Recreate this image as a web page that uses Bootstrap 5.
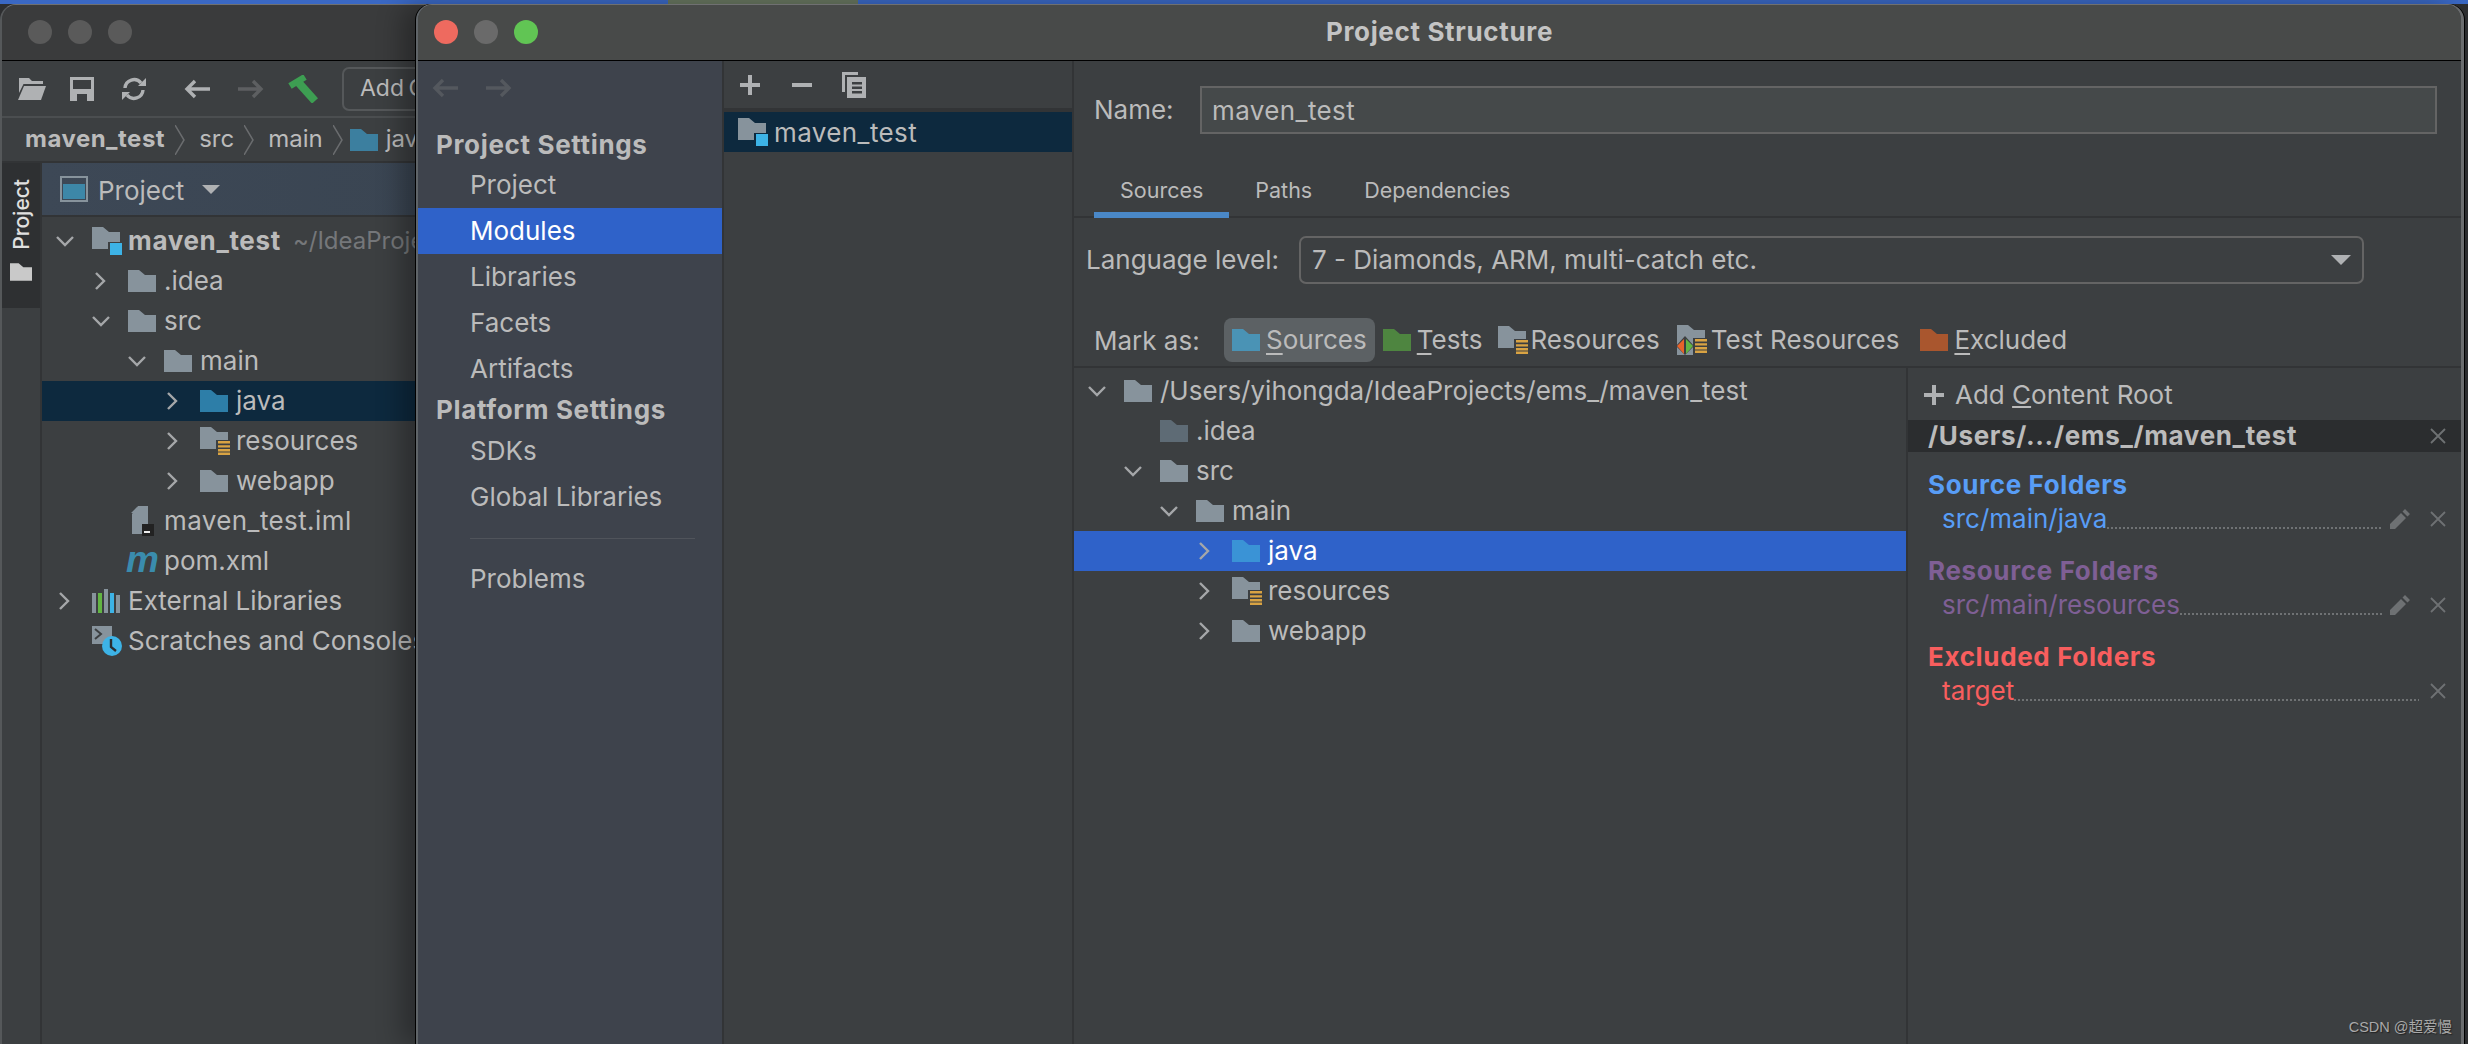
<!DOCTYPE html>
<html lang="en">
<head>
<meta charset="utf-8">
<title>Project Structure</title>
<link rel="stylesheet" href="https://cdn.jsdelivr.net/npm/bootstrap@5.3.0/dist/css/bootstrap.min.css">
<style>
html,body{height:100%;}
body{margin:0;position:relative;overflow:hidden;width:2468px;height:1044px;font-family:Inter,"Noto Sans CJK SC",sans-serif;font-size:26px;line-height:1.2;color:#bbb;
 background:linear-gradient(to right,#3a68c4 668px,#67755f 668px,#67755f 858px,#3a68c4 858px) top/100% 4px no-repeat,#2d2e30;}
svg{display:block;flex:none;}
.ide-win{position:absolute;top:4px;bottom:0;display:flex;flex-direction:column;overflow:hidden;border-radius:16px 16px 0 0;border-top:1px solid #6f7071;}
.main-win{left:0;width:440px;background:#3c3f41;border-left:2px solid #55585a;}
.dialog-win{left:416px;width:2048px;background:#3c3f41;border-left:2px solid #5f6468;border-right:3px solid #6a6c6e;box-shadow:-1px 0 0 #000,1px 0 0 #000,-14px 0 26px rgba(0,0,0,.3);}
.title-bar{height:56px;flex:none;border-bottom:1px solid #000;display:flex;align-items:center;position:relative;}
.main-win .title-bar{background:#3a3b3c;}
.dialog-win .title-bar{background:#484a49;justify-content:center;font-weight:700;font-size:26px;letter-spacing:.65px;color:#c4c4c4;padding-bottom:2px;}
.lights{position:absolute;display:flex;gap:16px;top:15px;left:26px;}
.dialog-win .lights{left:16px;}
.light{width:24px;height:24px;border-radius:50%;background:#5a5a5a;}
.l-red{background:#ee6a5f;}.l-gray{background:#6a6a6a;}.l-green{background:#61c554;}
.tool-bar{height:57px;flex:none;border-bottom:2px solid #4b4e50;display:flex;align-items:center;padding-left:16px;font-size:23px;}
.tb-sep{width:2px;height:40px;background:#55585a;margin:0 18px 0 20px;}
.add-btn{border:2px solid #55585a;border-radius:7px;height:44px;margin-left:24px;padding:0 16px;display:flex;align-items:center;white-space:nowrap;word-spacing:-2px;}
.crumbs{height:45px;flex:none;border-bottom:2px solid #323436;display:flex;align-items:center;padding-left:23px;white-space:nowrap;font-size:24px;}
.crumbs .b{letter-spacing:.5px;}
.crumb-gap{margin:0 14px 0 10px;}
.crumb-gap.last{margin-right:7px;}
.main-body{flex:1;display:flex;min-height:0;}
.tool-strip{width:38px;flex:none;border-right:2px solid #323436;box-sizing:content-box;}
.strip-tab{background:#2e3032;height:145px;display:flex;flex-direction:column;align-items:center;padding-top:16px;gap:13px;color:#e0e0e0;font-size:21px;font-weight:500;}
.strip-text{writing-mode:vertical-rl;transform:rotate(180deg);line-height:1;}
.proj-panel{flex:1;min-width:0;}
.proj-head{height:54px;background:linear-gradient(to right,#3d4856,#3a4552);border-bottom:2px solid #323436;display:flex;align-items:center;padding-left:18px;}
.proj-head .ttl{margin-left:10px;margin-right:18px;padding-top:3px;}
.left-tree{padding-top:4px;}
.t-row{height:40px;display:flex;align-items:center;white-space:nowrap;}
.pl0{padding-left:14px;}.pl1{padding-left:50px;}.pl2{padding-left:86px;}.pl3{padding-left:122px;}
.chev{width:36px;flex:none;display:flex;}
.ico{width:36px;flex:none;display:flex;}
.ico .mvn{font:italic 700 37px/1 "Liberation Sans",sans-serif;color:#3a8cad;margin-left:-2px;margin-top:-8px;height:32px;letter-spacing:0;}
.is-sel{background:#0d293e;}
.is-act{background:#2f62c9;color:#fff;}
.b{font-weight:700;letter-spacing:.65px;}
.dim{color:#75777a;}
.wide{letter-spacing:.4px;}
.side{width:304px;flex:none;background:#3e434c;display:flex;flex-direction:column;}
.side-top{height:67px;flex:none;display:flex;align-items:center;gap:28px;padding:0 0 13px 14px;}
.side-h{font-weight:700;letter-spacing:.65px;padding-left:18px;display:flex;align-items:center;flex:none;}
.side-i{height:46px;flex:none;padding-left:52px;display:flex;align-items:center;}
.side-sep{height:1px;background:#50545b;margin:18px 27px 17px 52px;flex:none;}
.mid{width:352px;flex:none;border-left:2px solid #323436;border-right:2px solid #323436;}
.mid-tools{height:47px;border-bottom:4px solid #323436;box-sizing:content-box;display:flex;align-items:center;padding-left:16px;gap:32px;}
.mid-row{height:40px;display:flex;align-items:center;padding-left:14px;white-space:nowrap;}
.mid-row .wide{padding-top:2px;}
.rt{flex:1;min-width:0;display:flex;flex-direction:column;}
.name-row{height:73px;flex:none;display:flex;align-items:flex-end;padding:0 24px 0 20px;}
.name-row .lbl{width:106px;flex:none;height:48px;display:flex;align-items:center;}
.name-input.form-control{flex:1;height:48px;background:#45494a;border:2px solid #646464;border-radius:0;color:#bbb;font-size:26px;letter-spacing:.4px;padding:0 10px;box-shadow:none;}
.tab-strip{height:84px;flex:none;padding-left:20px;border-bottom:2px solid #323436;flex-wrap:nowrap;align-items:flex-end;}
.tab-strip .nav-link{height:58px;padding:18px 26px 0;color:#bbb;font-size:21.500px;line-height:24px;background:none;border:0;margin-bottom:-2px;}
.tab-strip .nav-link.active{border-bottom:6px solid #4a88c7;}
.lang-row{height:66px;flex:none;display:flex;align-items:flex-end;padding:0 97px 0 12px;}
.lang-row .lbl{width:213px;flex:none;height:48px;display:flex;align-items:center;}
.combo{flex:1;height:48px;border:2px solid #646464;border-radius:7px;display:flex;align-items:center;justify-content:space-between;padding:0 11px;}
.mark-row{height:84px;flex:none;display:flex;align-items:flex-end;padding:0 0 4px 20px;border-bottom:2px solid #323436;box-sizing:border-box;}
.mark-row .lbl{width:130px;flex:none;height:44px;display:flex;align-items:center;padding-top:1px;}
.mk{height:44px;display:flex;align-items:center;gap:6px;padding:0 8px;white-space:nowrap;border-radius:8px;}
.mk.on{background:#5c6164;}
.mk u{text-underline-offset:4px;}
.res-ico{margin-right:-4px;}
.test-ico{margin-right:-3px;}
.exc-ico{margin-left:5px;}
.split{flex:1;display:flex;min-height:0;}
.right-tree{flex:none;width:832px;border-right:2px solid #323436;box-sizing:content-box;padding-top:3px;}
.roots{flex:1;min-width:0;}
.add-root{height:52px;display:flex;align-items:center;padding:2px 0 0 16px;gap:11px;}
.root-h{height:32px;background:#2b2d2f;display:flex;align-items:center;justify-content:space-between;padding:0 15px 0 20px;font-weight:700;letter-spacing:.65px;}
.grp{padding-top:16px;}
.grp+.grp{padding-top:18px;}
.grp-h{height:34px;font-weight:700;letter-spacing:.65px;padding-left:20px;display:flex;align-items:center;}
.grp-r{height:34px;display:flex;padding-left:34px;padding-right:15px;align-items:center;}
.dots{flex:1;height:2px;background:repeating-linear-gradient(to right,#6f7274 0 2px,transparent 2px 4px);align-self:flex-end;margin-bottom:7px;}
.ed{margin-left:7px;}
.rm{margin-left:20px;}
.rm-wide{margin-left:11px;}
.c-src{color:#589df6;}.c-res{color:#7f5f95;}.c-exc{color:#f85e5e;}
.wm{position:absolute;right:16px;bottom:8px;font:14.500px "Liberation Sans","Noto Sans CJK SC",sans-serif;color:#a9a9a9;text-shadow:1px 1px 1px #222;}
</style>
</head>
<body>
<svg width="0" height="0" style="position:absolute">
<defs>
<symbol id="folder" viewBox="0 0 28 22"><path d="M0 0h11l6 5h11v17H0z"/></symbol>
<symbol id="folder-mod" viewBox="0 0 30 28"><path fill="#87939c" d="M0 0h11l6 5h11v10H16v7H0z"/><rect x="18" y="16" width="12" height="12" fill="#3db3e6"/></symbol>
<symbol id="folder-res" viewBox="0 0 30 28"><path fill="#87939c" d="M0 0h11l6 5h11v8H16v9H0z"/><path fill="#d9a343" d="M18 14h12v2.400H18zM18 18.200h12v2.400H18zM18 22h12v2.400H18zM18 25.600h12V28H18z"/></symbol>
<symbol id="c-down" viewBox="0 0 18 12"><path d="M1 2l8 8 8-8" fill="none" stroke="#a5a7a9" stroke-width="2.400"/></symbol>
<symbol id="c-right" viewBox="0 0 18 18"><path d="M4 1l8 8-8 8" fill="none" stroke="#a5a7a9" stroke-width="2.400"/></symbol>
<symbol id="x" viewBox="0 0 16 16"><path d="M1 1l14 14M15 1L1 15" fill="none" stroke="#6e7173" stroke-width="1.800"/></symbol>
<symbol id="pen" viewBox="0 0 20 20"><path fill="#6e7173" d="M0 20v-5L11 4l5 5L5 20zM12.500 2.500L15 0l5 5-2.500 2.500z"/></symbol>
<symbol id="plus" viewBox="0 0 20 20"><path d="M8 0h4v8h8v4h-8v8H8v-8H0V8h8z" fill="#afb1b3"/></symbol>
<symbol id="back" viewBox="0 0 26 20"><path d="M11 2l-8 8 8 8M3 10h23" fill="none" stroke="currentColor" stroke-width="3.400"/></symbol>
<symbol id="fwd" viewBox="0 0 26 20"><path d="M15 2l8 8-8 8M23 10H0" fill="none" stroke="currentColor" stroke-width="3.400"/></symbol>
<symbol id="crumb-sep" viewBox="0 0 10 30"><path d="M0 0l9 15-9 15" fill="none" stroke="#6a6c6e" stroke-width="1.500"/></symbol>
</defs>
</svg>

<section class="ide-win main-win">
  <div class="title-bar"><div class="lights"><span class="light"></span><span class="light"></span><span class="light"></span></div></div>
  <div class="tool-bar">
    <svg width="28" height="22" viewBox="0 0 28 22" fill="#afb1b3"><path d="M1 0h10l3 3h11v3H5.500L1 15z"/><path d="M6 8h22l-5 14H0z"/></svg>
    <svg class="ms-4" width="24" height="24" viewBox="0 0 24 24"><path fill="#afb1b3" fill-rule="evenodd" d="M0 0h24v24H0zM3 3v9h18V3zM7 17v7h10v-7z"/></svg>
    <svg width="24" height="24" viewBox="0 0 24 24" style="margin-left:28px" fill="none" stroke="#afb1b3" stroke-width="3.400"><path d="M3 11a9 9 0 0 1 16-5M21 13a9 9 0 0 1-16 5"/><path fill="#afb1b3" stroke="none" d="M16 9h8V1zM8 15H0v8z"/></svg>
    <div class="tb-sep"></div>
    <svg width="26" height="20" style="color:#afb1b3"><use href="#back"/></svg>
    <svg width="26" height="20" style="margin-left:28px;color:#5d5f61"><use href="#fwd"/></svg>
    <svg width="30" height="28" viewBox="0 0 30 28" style="margin-left:24px"><path d="M2 11L17 2" stroke="#3d9e52" stroke-width="6.500" fill="none"/><path d="M10 7l17 19" stroke="#3d9e52" stroke-width="8" fill="none"/></svg>
    <div class="add-btn">Add Configuration...</div>
  </div>
  <div class="crumbs">
    <span class="b">maven_test</span>
    <svg class="crumb-gap" width="10" height="30"><use href="#crumb-sep"/></svg>
    <span>src</span>
    <svg class="crumb-gap" width="10" height="30"><use href="#crumb-sep"/></svg>
    <span>main</span>
    <svg class="crumb-gap last" width="10" height="30"><use href="#crumb-sep"/></svg>
    <svg width="28" height="22" fill="#3c7f9f" style="margin-right:8px"><use href="#folder"/></svg>
    <span>java</span>
  </div>
  <div class="main-body">
    <div class="tool-strip">
      <div class="strip-tab"><span class="strip-text">Project</span>
        <svg width="22" height="18" fill="#c9c9c9"><use href="#folder"/></svg></div>
    </div>
    <div class="proj-panel">
      <div class="proj-head">
        <svg width="28" height="26" viewBox="0 0 28 26"><rect x="1" y="1" width="26" height="24" fill="none" stroke="#87939c" stroke-width="2"/><rect x="3" y="8" width="22" height="15" fill="#3d87a8"/></svg>
        <span class="ttl">Project</span>
        <svg width="18" height="9" viewBox="0 0 18 9"><path d="M0 0h18L9 9z" fill="#afb1b3"/></svg>
      </div>
      <div class="left-tree">
        <div class="t-row pl0"><span class="chev"><svg width="18" height="12"><use href="#c-down"/></svg></span><span class="ico"><svg width="30" height="28"><use href="#folder-mod"/></svg></span><span class="b">maven_test</span><span class="dim" style="margin-left:12px;font-size:24px">~/IdeaProjects/ems_/maven_test</span></div>
        <div class="t-row pl1"><span class="chev"><svg width="18" height="18"><use href="#c-right"/></svg></span><span class="ico"><svg width="28" height="22" fill="#87939c"><use href="#folder"/></svg></span>.idea</div>
        <div class="t-row pl1"><span class="chev"><svg width="18" height="12"><use href="#c-down"/></svg></span><span class="ico"><svg width="28" height="22" fill="#87939c"><use href="#folder"/></svg></span>src</div>
        <div class="t-row pl2"><span class="chev"><svg width="18" height="12"><use href="#c-down"/></svg></span><span class="ico"><svg width="28" height="22" fill="#87939c"><use href="#folder"/></svg></span>main</div>
        <div class="t-row pl3 is-sel"><span class="chev"><svg width="18" height="18"><use href="#c-right"/></svg></span><span class="ico"><svg width="28" height="22" fill="#2d7ea8"><use href="#folder"/></svg></span>java</div>
        <div class="t-row pl3"><span class="chev"><svg width="18" height="18"><use href="#c-right"/></svg></span><span class="ico"><svg width="30" height="28"><use href="#folder-res"/></svg></span>resources</div>
        <div class="t-row pl3"><span class="chev"><svg width="18" height="18"><use href="#c-right"/></svg></span><span class="ico"><svg width="28" height="22" fill="#87939c"><use href="#folder"/></svg></span>webapp</div>
        <div class="t-row pl1"><span class="chev"></span><span class="ico"><svg width="30" height="30" viewBox="0 0 30 30"><path fill="#87939c" d="M10 0h10v18h-6v10H4V8zM3 7l6-6v6z"/><rect x="14" y="18" width="12" height="12" fill="#222"/><rect x="16" y="25" width="6" height="2" fill="#eee"/></svg></span><span class="wide">maven_test.iml</span></div>
        <div class="t-row pl1"><span class="chev"></span><span class="ico"><span class="mvn">m</span></span>pom.xml</div>
        <div class="t-row pl0"><span class="chev"><svg width="18" height="18"><use href="#c-right"/></svg></span><span class="ico"><svg width="28" height="24" viewBox="0 0 28 24"><rect y="4" width="4" height="20" fill="#87939c"/><rect x="6" y="4" width="4" height="20" fill="#62b543"/><rect x="12" width="4" height="24" fill="#87939c"/><rect x="18" y="4" width="4" height="20" fill="#3db3e6"/><rect x="24" y="6" width="4" height="18" fill="#87939c"/></svg></span>External Libraries</div>
        <div class="t-row pl0"><span class="chev"></span><span class="ico"><svg width="30" height="30" viewBox="0 0 30 30"><rect width="20" height="18" fill="#87939c"/><path d="M3 3l6 5-6 5" fill="none" stroke="#3c3f41" stroke-width="2"/><circle cx="20" cy="20" r="10" fill="#3db3e6"/><path d="M19 13v8l5 4" fill="none" stroke="#2b2d2f" stroke-width="2.400"/></svg></span>Scratches and Consoles</div>
      </div>
    </div>
  </div>
</section>

<section class="ide-win dialog-win">
  <div class="title-bar"><div class="lights"><span class="light l-red"></span><span class="light l-gray"></span><span class="light l-green"></span></div>Project Structure</div>
  <div class="flex-grow-1 d-flex" style="min-height:0">
    <nav class="side">
      <div class="side-top">
        <svg width="26" height="20" style="color:#54585e"><use href="#back"/></svg>
        <svg width="26" height="20" style="color:#54585e"><use href="#fwd"/></svg>
      </div>
      <div class="side-h" style="height:34px">Project Settings</div>
      <div class="side-i">Project</div>
      <div class="side-i is-act">Modules</div>
      <div class="side-i">Libraries</div>
      <div class="side-i">Facets</div>
      <div class="side-i">Artifacts</div>
      <div class="side-h" style="height:36px">Platform Settings</div>
      <div class="side-i">SDKs</div>
      <div class="side-i">Global Libraries</div>
      <div class="side-sep"></div>
      <div class="side-i">Problems</div>
    </nav>
    <div class="mid">
      <div class="mid-tools">
        <svg width="20" height="20"><use href="#plus"/></svg>
        <svg width="20" height="4" viewBox="0 0 20 4"><rect width="20" height="4" fill="#afb1b3"/></svg>
        <svg width="24" height="26" viewBox="0 0 24 26" style="margin-left:-2px"><path fill="#afb1b3" fill-rule="evenodd" d="M0 0h16v3H3v17H0zM5 5h19v21H5zM10 10v2.400h10V10zM10 14.500v2.400h10v-2.400zM10 19v2.400h10V19z"/></svg>
      </div>
      <div class="mid-row is-sel"><span class="ico"><svg width="30" height="28"><use href="#folder-mod"/></svg></span><span class="wide">maven_test</span></div>
    </div>
    <div class="rt">
      <div class="name-row"><span class="lbl">Name:</span><input class="form-control name-input" value="maven_test" aria-label="Name"></div>
      <ul class="nav tab-strip">
        <li class="nav-item"><a class="nav-link active" href="#">Sources</a></li>
        <li class="nav-item"><a class="nav-link" href="#">Paths</a></li>
        <li class="nav-item"><a class="nav-link" href="#">Dependencies</a></li>
      </ul>
      <div class="lang-row"><span class="lbl">Language level:</span>
        <div class="combo"><span>7 - Diamonds, ARM, multi-catch etc.</span><svg width="20" height="10" viewBox="0 0 20 10"><path d="M0 0h20L10 10z" fill="#afb1b3"/></svg></div>
      </div>
      <div class="mark-row"><span class="lbl">Mark as:</span>
        <span class="mk on"><svg width="28" height="22" fill="#4a93b5"><use href="#folder"/></svg><span><u>S</u>ources</span></span>
        <span class="mk"><svg width="28" height="22" fill="#4e8540"><use href="#folder"/></svg><span><u>T</u>ests</span></span>
        <span class="mk"><svg class="res-ico" width="30" height="28"><use href="#folder-res"/></svg><span>Resources</span></span>
        <span class="mk"><svg class="test-ico" width="32" height="30" viewBox="0 0 32 30"><path fill="#87939c" d="M1 0h11l6 5h11v8H17v17H1z"/><path fill="#3c3f41" d="M0 21L9 11l9 10-9 9z"/><path fill="#e8632a" d="M8 14v15l-7-8z"/><path fill="#62b543" d="M10 14v15l7-8z"/><path fill="#d9a343" d="M19 14h12v2.400H19zM19 18.200h12v2.400H19zM19 22h12v2.400H19zM19 25.600h12V28H19z"/></svg><span>Test Resources</span></span>
        <span class="mk"><svg class="exc-ico" width="28" height="22" fill="#a9562e"><use href="#folder"/></svg><span><u>E</u>xcluded</span></span>
      </div>
      <div class="split">
        <div class="right-tree">
          <div class="t-row pl0"><span class="chev"><svg width="18" height="12"><use href="#c-down"/></svg></span><span class="ico"><svg width="28" height="22" fill="#87939c"><use href="#folder"/></svg></span>/Users/yihongda/IdeaProjects/ems_/maven_test</div>
          <div class="t-row pl1"><span class="chev"></span><span class="ico"><svg width="28" height="22" fill="#5e6b75"><use href="#folder"/></svg></span>.idea</div>
          <div class="t-row pl1"><span class="chev"><svg width="18" height="12"><use href="#c-down"/></svg></span><span class="ico"><svg width="28" height="22" fill="#87939c"><use href="#folder"/></svg></span>src</div>
          <div class="t-row pl2"><span class="chev"><svg width="18" height="12"><use href="#c-down"/></svg></span><span class="ico"><svg width="28" height="22" fill="#87939c"><use href="#folder"/></svg></span>main</div>
          <div class="t-row pl3 is-act"><span class="chev"><svg width="18" height="18"><use href="#c-right"/></svg></span><span class="ico"><svg width="28" height="22" fill="#3a93d6"><use href="#folder"/></svg></span>java</div>
          <div class="t-row pl3"><span class="chev"><svg width="18" height="18"><use href="#c-right"/></svg></span><span class="ico"><svg width="30" height="28"><use href="#folder-res"/></svg></span>resources</div>
          <div class="t-row pl3"><span class="chev"><svg width="18" height="18"><use href="#c-right"/></svg></span><span class="ico"><svg width="28" height="22" fill="#87939c"><use href="#folder"/></svg></span>webapp</div>
        </div>
        <div class="roots">
          <div class="add-root"><svg width="20" height="20"><use href="#plus"/></svg><span>Add <u>C</u>ontent Root</span></div>
          <div class="root-h"><span>/Users/.../ems_/maven_test</span><svg width="16" height="16"><use href="#x"/></svg></div>
          <div class="grp">
            <div class="grp-h c-src">Source Folders</div>
            <div class="grp-r c-src"><span>src/main/java</span><span class="dots"></span><svg class="ed" width="20" height="20"><use href="#pen"/></svg><svg class="rm" width="16" height="16"><use href="#x"/></svg></div>
          </div>
          <div class="grp">
            <div class="grp-h c-res">Resource Folders</div>
            <div class="grp-r c-res"><span>src/main/resources</span><span class="dots"></span><svg class="ed" width="20" height="20"><use href="#pen"/></svg><svg class="rm" width="16" height="16"><use href="#x"/></svg></div>
          </div>
          <div class="grp">
            <div class="grp-h c-exc">Excluded Folders</div>
            <div class="grp-r c-exc"><span>target</span><span class="dots"></span><svg class="rm-wide" width="16" height="16"><use href="#x"/></svg></div>
          </div>
        </div>
      </div>
    </div>
  </div>
</section>
<div class="wm">CSDN @超爱慢</div>
<script src="https://cdn.jsdelivr.net/npm/bootstrap@5.3.0/dist/js/bootstrap.bundle.min.js"></script>
</body>
</html>
